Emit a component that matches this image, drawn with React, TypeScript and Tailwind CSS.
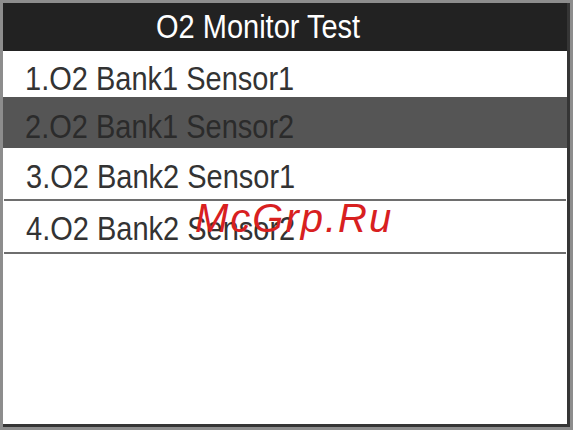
const rows = [
  { label: '1.O2 Bank1 Sensor1', h: 'h-[46px] pt-[11px]', selected: false, line: false },
  { label: '2.O2 Bank1 Sensor2', h: 'h-[51px] pt-[9px]', selected: true, line: false },
  { label: '3.O2 Bank2 Sensor1', h: 'h-[53px] pt-[8px]', selected: false, line: true },
  { label: '4.O2 Bank2 Sensor2', h: 'h-[53px] pt-[5px]', selected: false, line: true },
];

export default function App() {
  return (
    <div className="w-[573px] h-[430px] bg-[#8d8d8d] p-[3px] font-['Liberation_Sans',Arial,sans-serif]">
      <div className="relative h-full flex flex-col bg-white border-r-[3px] border-b-[3px] border-[#353535]">
        <div className="h-[48px] shrink-0 bg-[#222222] flex items-center pl-[153px]">
          <span className="inline-block scale-y-[1.12] text-[29px] leading-none text-white">O2 Monitor Test</span>
        </div>
        <ul className="flex flex-col">
          {rows.map((r) => (
            <li
              key={r.label}
              className={`${r.h} flex items-center pl-[22px] ${
                r.selected ? 'bg-[#555555] text-[#2b2b2b]' : 'bg-white text-[#333333]'
              } ${r.line ? 'border-b-2 border-[#6e6e6e] mx-[1px]' : ''}`}
            >
              <span className="inline-block scale-y-[1.12] text-[29px] leading-none">{r.label}</span>
            </li>
          ))}
        </ul>
        <div className="flex-1" />
        <span className="absolute left-[192px] top-[195px] text-[40px] leading-none italic tracking-[2px] text-[#d8201f]">
          McGrp.Ru
        </span>
      </div>
    </div>
  );
}
